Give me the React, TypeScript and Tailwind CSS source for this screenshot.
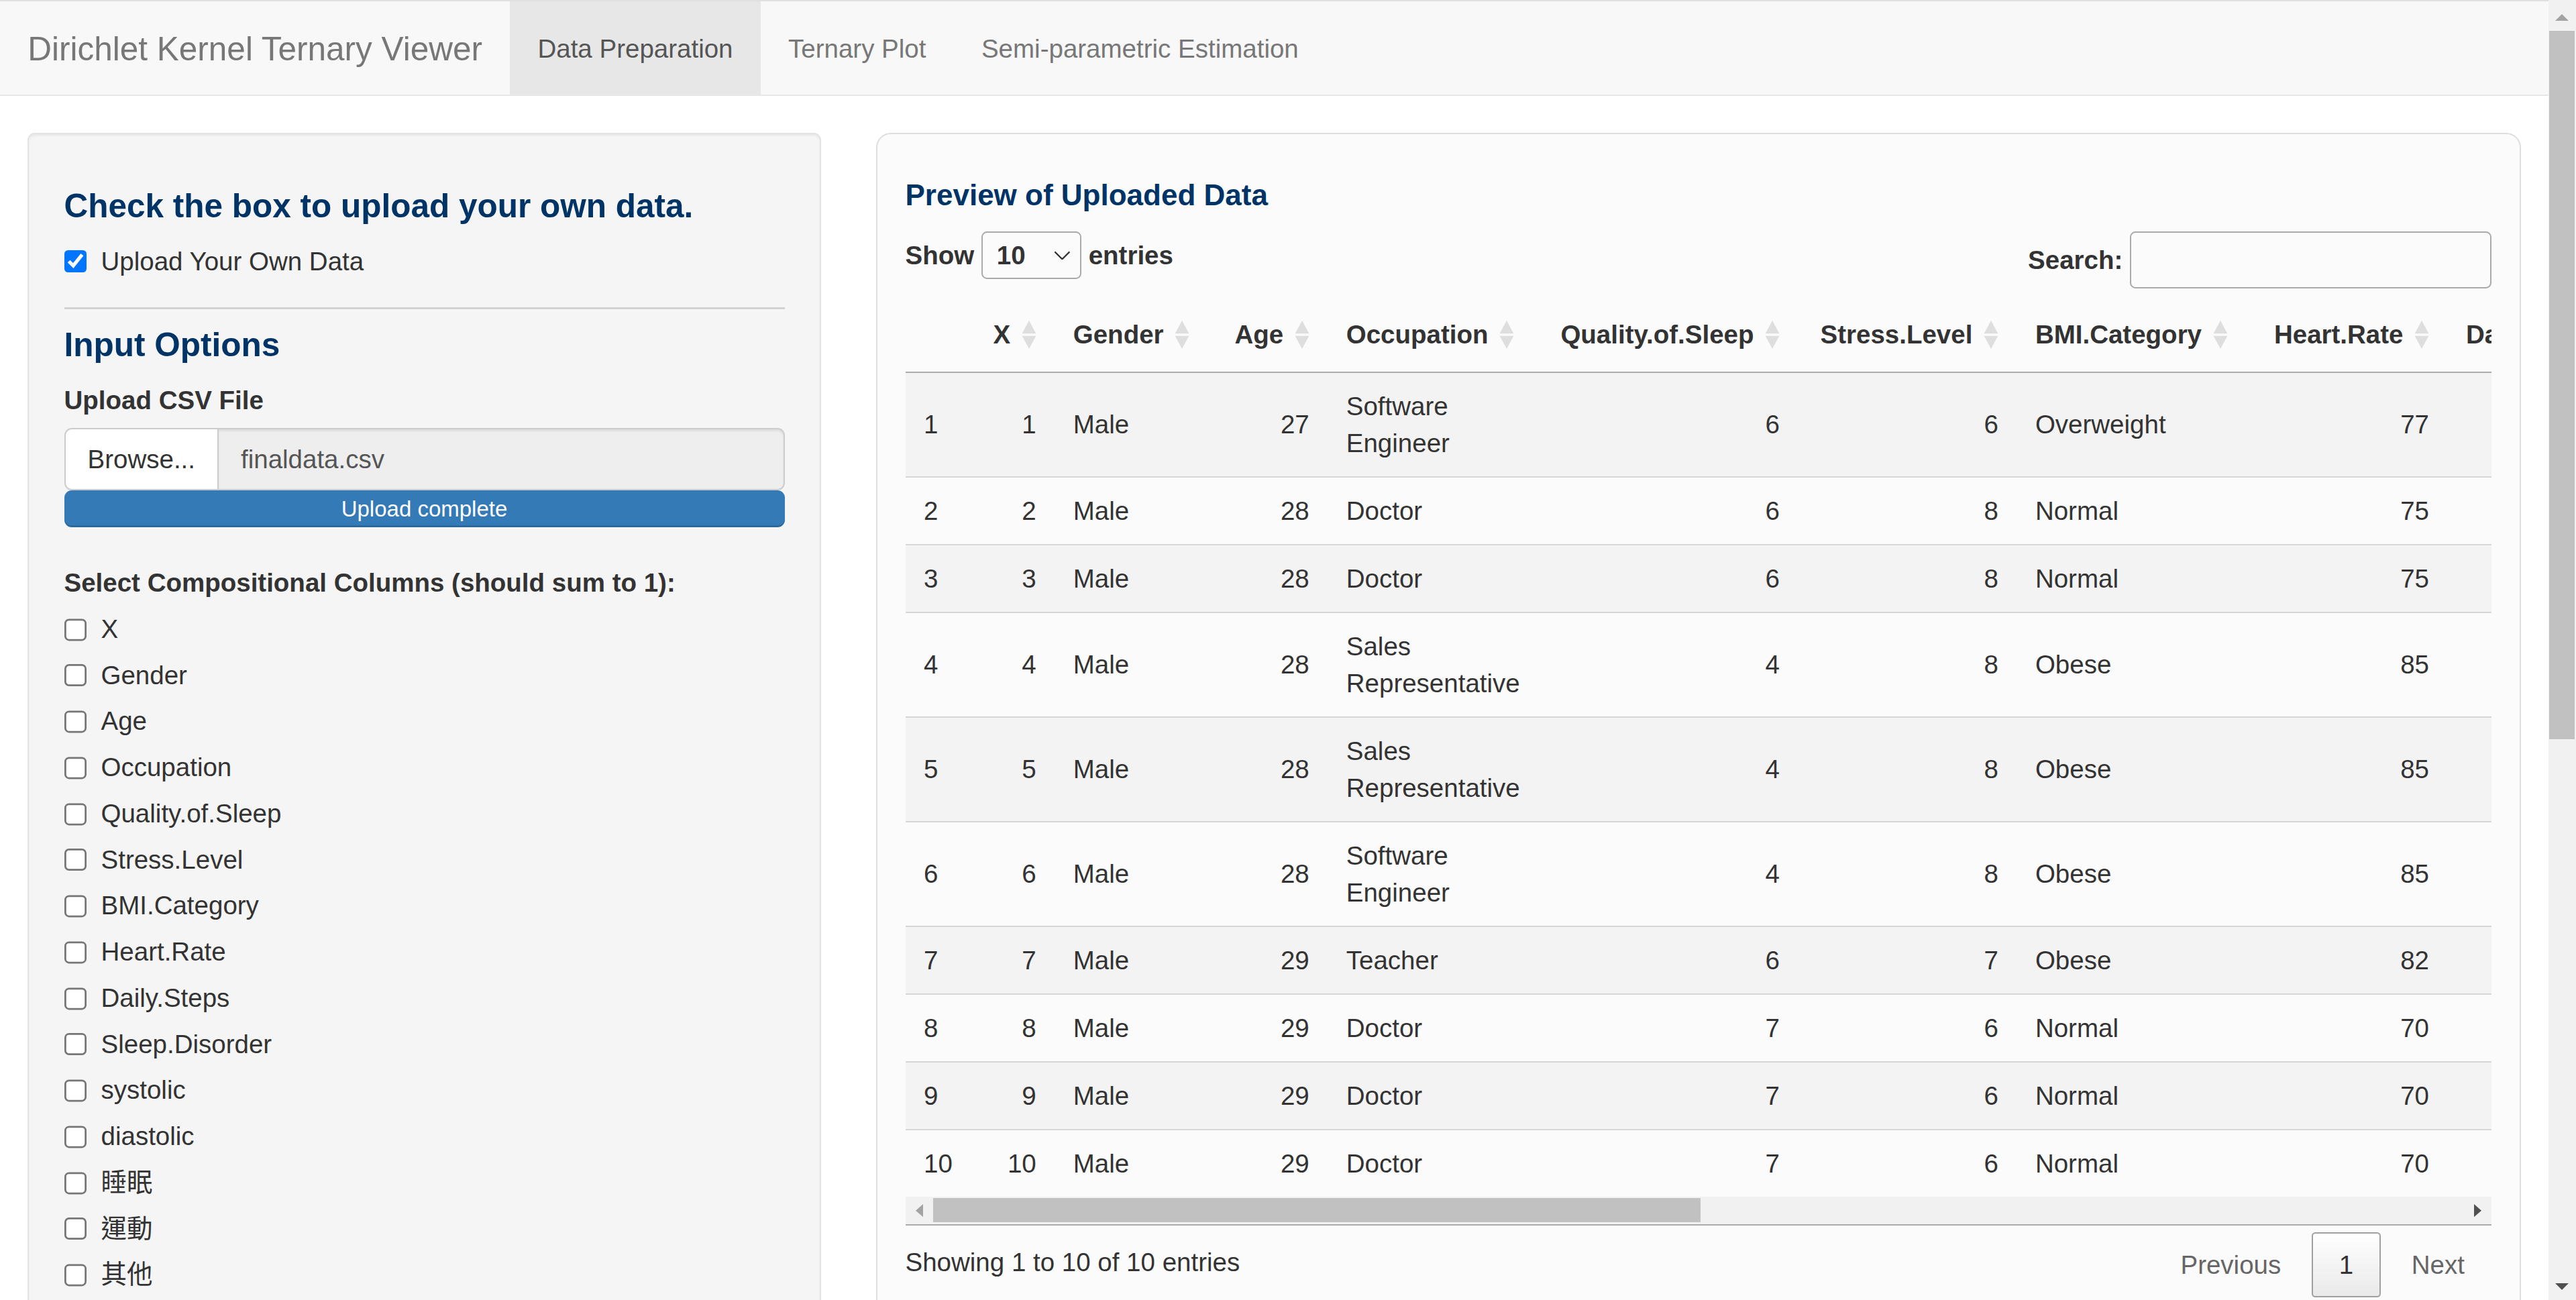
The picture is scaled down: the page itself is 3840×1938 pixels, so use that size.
import React from 'react';

type Col = { label: string; w: string; right: boolean; headLeft?: boolean };

const cols: Col[] = [
  { label: '', w: 'w-[37px]', right: false },
  { label: 'X', w: 'w-[44px]', right: true },
  { label: 'Gender', w: 'w-[85.5px]', right: false },
  { label: 'Age', w: 'w-[62.5px]', right: true },
  { label: 'Occupation', w: 'w-[115.5px]', right: false },
  { label: 'Quality.of.Sleep', w: 'w-[139.5px]', right: true },
  { label: 'Stress.Level', w: 'w-[118.5px]', right: true },
  { label: 'BMI.Category', w: 'w-[126.5px]', right: false },
  { label: 'Heart.Rate', w: 'w-[107px]', right: true },
  { label: 'Daily.Steps', w: 'w-[118px]', right: true, headLeft: true },
  { label: 'Sleep.Disorder', w: 'w-[125px]', right: false },
  { label: 'systolic', w: 'w-[82px]', right: true },
  { label: 'diastolic', w: 'w-[88px]', right: true },
  { label: '睡眠', w: 'w-[70px]', right: true },
  { label: '運動', w: 'w-[70px]', right: true },
  { label: '其他', w: 'w-[70px]', right: true },
];

const rows: (string | number)[][] = [
  [1, 1, 'Male', 27, 'Software Engineer', 6, 6, 'Overweight', 77, 4200, 'None', 126, 83, 0.254, 0.029, 0.717],
  [2, 2, 'Male', 28, 'Doctor', 6, 8, 'Normal', 75, 10000, 'None', 125, 80, 0.258, 0.042, 0.7],
  [3, 3, 'Male', 28, 'Doctor', 6, 8, 'Normal', 75, 10000, 'None', 125, 80, 0.258, 0.042, 0.7],
  [4, 4, 'Male', 28, 'Sales Representative', 4, 8, 'Obese', 85, 3000, 'Sleep Apnea', 140, 90, 0.246, 0.021, 0.733],
  [5, 5, 'Male', 28, 'Sales Representative', 4, 8, 'Obese', 85, 3000, 'Sleep Apnea', 140, 90, 0.246, 0.021, 0.733],
  [6, 6, 'Male', 28, 'Software Engineer', 4, 8, 'Obese', 85, 3000, 'Insomnia', 140, 90, 0.246, 0.021, 0.733],
  [7, 7, 'Male', 29, 'Teacher', 6, 7, 'Obese', 82, 3500, 'Insomnia', 140, 90, 0.263, 0.028, 0.709],
  [8, 8, 'Male', 29, 'Doctor', 7, 6, 'Normal', 70, 8000, 'None', 120, 80, 0.325, 0.052, 0.623],
  [9, 9, 'Male', 29, 'Doctor', 7, 6, 'Normal', 70, 8000, 'None', 120, 80, 0.325, 0.052, 0.623],
  [10, 10, 'Male', 29, 'Doctor', 7, 6, 'Normal', 70, 8000, 'None', 120, 80, 0.325, 0.052, 0.623],
];

const columnChoices = [
  'X',
  'Gender',
  'Age',
  'Occupation',
  'Quality.of.Sleep',
  'Stress.Level',
  'BMI.Category',
  'Heart.Rate',
  'Daily.Steps',
  'Sleep.Disorder',
  'systolic',
  'diastolic',
  '睡眠',
  '運動',
  '其他',
];

const tabs = ['Data Preparation', 'Ternary Plot', 'Semi-parametric Estimation'];

const SortIcon = () => (
  <svg width="8" height="16" viewBox="0 0 8 16" className="shrink-0">
    <path d="M4 0.4L7.8 7.4H0.2Z M0.2 8.6H7.8L4 15.6Z" fill="#dedede" />
  </svg>
);

const Navbar = () => (
  <nav className="flex h-[52px] border-y border-t-[#e0e0e0] border-b-[#e7e7e7] bg-[#f8f8f8]">
    <div className="px-[15px] pt-[15.5px] pb-[14.5px] text-[18px] leading-[20px] text-[#777]">
      Dirichlet Kernel Ternary Viewer
    </div>
    <div className="flex">
      {tabs.map((t, i) => (
        <div
          key={t}
          className={`px-[15px] pt-[15.5px] pb-[14.5px] leading-[20px] ${
            i === 0 ? 'bg-[#e7e7e7] text-[#555]' : 'text-[#777]'
          }`}
        >
          {t}
        </div>
      ))}
    </div>
  </nav>
);

const Sidebar = () => (
  <div className="w-[430px] shrink-0 rounded-[4px] border border-[#e3e3e3] bg-[#f5f5f5] p-[19px] shadow-[inset_0_1px_1px_rgba(0,0,0,0.05)]">
    <h4 className="mt-[10px] mb-[10px] text-[18px] leading-[1.1] font-bold text-[#003366]">
      Check the box to upload your own data.
    </h4>
    <label className="flex items-start">
      <input type="checkbox" defaultChecked className="m-0 mt-[4px] mr-[7px] h-[13px] w-[13px] shrink-0" />
      <span>Upload Your Own Data</span>
    </label>

    <div className="mt-[15px] h-px bg-[#d2d2d2]" />

    <h4 className="mt-[9.5px] mb-[10px] text-[18px] leading-[1.1] font-bold text-[#003366]">Input Options</h4>
    <div className="mb-[5px] font-bold">Upload CSV File</div>
    <div className="flex h-[34px]">
      <div className="flex items-center rounded-l-[4px] border border-[#ccc] bg-white px-[12px]">Browse...</div>
      <div className="flex flex-1 items-center rounded-r-[4px] border border-l-0 border-[#ccc] bg-[#eee] px-[12px] text-[#555] shadow-[inset_0_1px_1px_rgba(0,0,0,0.075)]">
        finaldata.csv
      </div>
    </div>
    <div className="h-[20px] rounded-[4px] bg-[#337ab7] text-center text-[12px] leading-[20px] text-white shadow-[inset_0_-1px_0_rgba(0,0,0,0.15)]">
      Upload complete
    </div>

    <div className="mt-[20px] mb-[5px] font-bold">Select Compositional Columns (should sum to 1):</div>
    <div className="flex flex-col gap-[5px] pb-[10px]">
      {columnChoices.map((c) => (
        <label key={c} className="flex items-start">
          <input type="checkbox" className="m-0 mt-[4px] mr-[7px] h-[13px] w-[13px] shrink-0" />
          <span>{c}</span>
        </label>
      ))}
    </div>
  </div>
);

const HScrollbar = () => (
  <div className="flex h-[15px] bg-[#f1f1f1]">
    <div className="flex w-[15px] items-center justify-center">
      <svg width="4" height="7" viewBox="0 0 4 7">
        <path d="M4 0V7L0 3.5Z" fill="#a3a3a3" />
      </svg>
    </div>
    <div className="my-[1px] w-[416px] bg-[#c1c1c1]" />
    <div className="flex-1" />
    <div className="flex w-[15px] items-center justify-center">
      <svg width="4" height="7" viewBox="0 0 4 7">
        <path d="M0 0V7L4 3.5Z" fill="#505050" />
      </svg>
    </div>
  </div>
);

const MainPanel = () => (
  <div className="min-w-0 flex-1 rounded-[8px] border border-[#dedede] bg-[#fbfbfb] px-[15px] pt-[24.5px] pb-[15px]">
    <h4 className="text-[16px] leading-[1.1] font-bold text-[#003366]">Preview of Uploaded Data</h4>

    <div className="mt-[10.5px] flex items-start justify-between">
      <div className="flex h-[26px] items-center font-bold">
        <span>Show</span>
        <div className="ml-[4px] flex h-[26px] w-[54px] items-center justify-between rounded-[3px] border border-[#aaa] pr-[5px] pl-[7.5px]">
          <span>10</span>
          <svg width="9" height="5" viewBox="0 0 9 5">
            <path d="M0.5 0.5L4.5 4.5L8.5 0.5" fill="none" stroke="#333" strokeWidth="0.8" />
          </svg>
        </div>
        <span className="ml-[4px]">entries</span>
      </div>
      <div className="flex h-[31px] items-center font-bold">
        <span>Search:</span>
        <div className="ml-[4px] h-[31px] w-[196px] rounded-[3px] border border-[#aaa]" />
      </div>
    </div>

    <div className="mt-[5px] border-b border-[#aaa]">
      <div className="overflow-hidden">
        <table className="w-[1459px] table-fixed border-collapse">
          <thead>
            <tr>
              {cols.map((c, i) => (
                <th key={i} className={`${c.w} border-b border-[#ababab] px-[10px] py-[10px] text-left font-bold whitespace-nowrap`}>
                  {c.label && (
                    <div className={`flex items-center gap-[6px] ${c.right && !c.headLeft ? 'justify-end' : ''}`}>
                      <span>{c.label}</span>
                      <SortIcon />
                    </div>
                  )}
                </th>
              ))}
            </tr>
          </thead>
          <tbody>
            {rows.map((r, ri) => (
              <tr key={ri} className={ri % 2 === 0 ? 'bg-[#f3f3f3]' : ''}>
                {r.map((v, ci) => (
                  <td
                    key={ci}
                    className={`px-[10px] py-[8px] align-middle ${ri > 0 ? 'border-t border-[#d6d6d6]' : ''} ${
                      cols[ci].right ? 'text-right' : 'text-left'
                    }`}
                  >
                    {v}
                  </td>
                ))}
              </tr>
            ))}
          </tbody>
        </table>
      </div>
      <HScrollbar />
    </div>

    <div className="flex items-start justify-between">
      <div className="pt-[10px]">Showing 1 to 10 of 10 entries</div>
      <div className="flex items-start pt-[3.5px]">
        <div className="border border-transparent px-[14px] py-[7px] text-[#666]">Previous</div>
        <div className="ml-[2px] rounded-[2px] border border-[#a0a0a0] bg-linear-to-b from-[#ffffff] to-[#e9e9e9] px-[14px] py-[7px] text-[#333]">
          1
        </div>
        <div className="ml-[2px] border border-transparent px-[14px] py-[7px] text-[#666]">Next</div>
      </div>
    </div>
  </div>
);

const PageScrollbar = () => (
  <div className="flex flex-1 flex-col bg-[#f1f1f1]">
    <div className="flex h-[46px] justify-center pt-[21px]">
      <svg width="20" height="10" viewBox="0 0 20 10">
        <path d="M10 0L20 10H0Z" fill="#a3a3a3" />
      </svg>
    </div>
    <div className="mr-[2px] ml-[1px] h-[1056px] bg-[#c1c1c1]" />
    <div className="flex-1" />
    <div className="flex h-[44px] justify-center pt-[19px]">
      <svg width="20" height="10" viewBox="0 0 20 10">
        <path d="M0 0H20L10 10Z" fill="#505050" />
      </svg>
    </div>
  </div>
);

export default function App() {
  return (
    <div className="flex h-[1938px] w-[3840px] overflow-hidden bg-white">
      <div className="h-[705px] w-[1381.4px] shrink-0 overflow-hidden bg-white font-['Liberation_Sans','Noto_Sans_CJK_TC',sans-serif] text-[14px] leading-[20px] text-[#333] [zoom:2.75]">
        <Navbar />
        <div className="flex items-start gap-[30px] px-[15px] pt-[20px]">
          <Sidebar />
          <MainPanel />
        </div>
      </div>
      <PageScrollbar />
    </div>
  );
}
